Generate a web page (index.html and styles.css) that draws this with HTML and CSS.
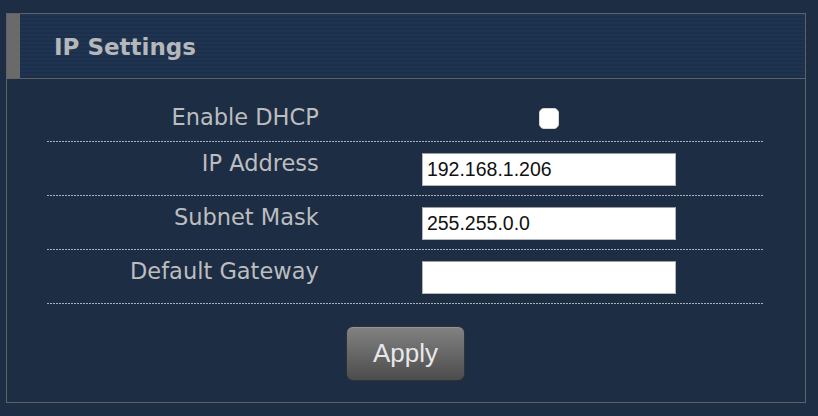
FILE: index.html
```html
<!DOCTYPE html>
<html>
<head>
<meta charset="utf-8">
<title>IP Settings</title>
<link rel="stylesheet" href="styles.css">
</head>
<body>
<div class="panel">
  <div class="panel-header"><h2 class="panel-title">IP Settings</h2></div>
  <form class="panel-body">
    <div class="row row-first">
      <label class="row-label" for="dhcp">Enable DHCP</label>
      <div class="row-value"><input type="checkbox" id="dhcp" class="check"></div>
    </div>
    <div class="row">
      <label class="row-label" for="ip">IP Address</label>
      <div class="row-value"><input type="text" id="ip" class="field" value="192.168.1.206"></div>
    </div>
    <div class="row">
      <label class="row-label" for="mask">Subnet Mask</label>
      <div class="row-value"><input type="text" id="mask" class="field" value="255.255.0.0"></div>
    </div>
    <div class="row">
      <label class="row-label" for="gw">Default Gateway</label>
      <div class="row-value"><input type="text" id="gw" class="field" value=""></div>
    </div>
    <div class="actions"><button type="button" class="btn">Apply</button></div>
  </form>
</div>
</body>
</html>
```
FILE: styles.css
```css
html, body {
  margin: 0;
  padding: 0;
  background: #1d2d44;
  height: 416px;
  overflow: hidden;
}
body {
  padding: 13px 0 0 6px;
  box-sizing: border-box;
  font-family: "DejaVu Sans", Verdana, sans-serif;
}
.panel {
  width: 800px;
  box-sizing: border-box;
  border: 1px solid #5e6166;
  background: #1d2d44;
}
.panel-header {
  height: 64px;
  border-left: 13px solid #6a6a6a;
  border-bottom: 1px solid #5e6166;
  background: repeating-linear-gradient(to bottom, #1f3451 0 2px, #1d304b 2px 4px);
}
.panel-title {
  margin: 0;
  padding-left: 34px;
  padding-top: 2px;
  line-height: 62px;
  font-size: 23px;
  font-weight: bold;
  color: #b5b7ba;
}
.panel-body {
  margin: 0;
  padding: 9px 41px 21px 40px;
}
.row {
  display: grid;
  grid-template-columns: 40% 60%;
  align-items: start;
  padding: 8px 0 9px 0;
  background-image: linear-gradient(to right, #aab1ba 0 2px, transparent 2px 3px);
  background-size: 3px 1px;
  background-repeat: repeat-x;
  background-position: left bottom;
  height: 54px;
  box-sizing: border-box;
}
.row-first {
  padding-top: 16px;
}
.row-label {
  text-align: right;
  padding-right: 15px;
  font-size: 22.5px;
  line-height: 26px;
  color: #bcbdbf;
}
.row-value {
  display: flex;
  justify-content: center;
}
.check {
  appearance: none;
  -webkit-appearance: none;
  margin: 4px 0 0 0;
  width: 20px;
  height: 21px;
  border-radius: 5px;
  background: #ffffff;
  border: 1px solid #d8d8d8;
  box-sizing: border-box;
}
.field {
  margin: 3px 0 0 0;
  width: 254px;
  height: 33px;
  box-sizing: border-box;
  border: 1px solid #b4b6b8;
  border-top-color: #9c9ea0;
  background: #ffffff;
  padding: 0 4px;
  font-family: "Liberation Sans", Arial, sans-serif;
  font-size: 19.5px;
  color: #111111;
  outline: none;
}
.actions {
  display: flex;
  justify-content: center;
  padding-top: 22px;
}
.btn {
  width: 119px;
  height: 55px;
  border-radius: 7px;
  border: 1px solid #2f3236;
  background: linear-gradient(to bottom, #828282, #4c4c4c);
  box-shadow: inset 0 1px 0 rgba(255,255,255,0.15);
  color: #e8e8ea;
  font-family: "Liberation Sans", Arial, sans-serif;
  font-size: 26px;
  padding: 0;
  cursor: pointer;
}
```
